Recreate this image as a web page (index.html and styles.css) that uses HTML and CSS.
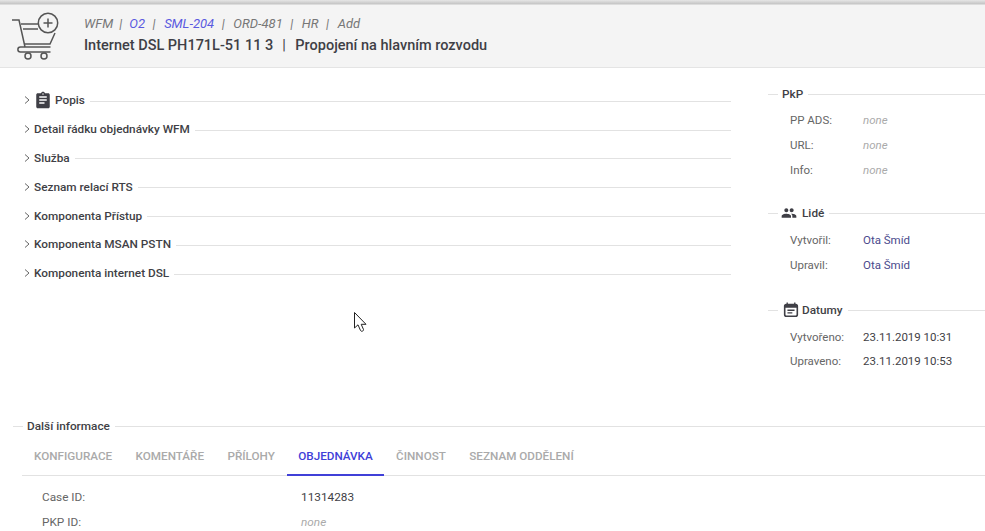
FILE: index.html
```html
<!DOCTYPE html>
<html lang="cs">
<head>
<meta charset="utf-8">
<title>Propojení na hlavním rozvodu</title>
<link rel="stylesheet" href="styles.css">
</head>
<body>
<header class="header">
  <svg class="cart" width="60" height="50" viewBox="0 0 60 50" fill="none" stroke="#555" stroke-width="1.500">
    <path d="M0 9H7L13 36"/>
    <path d="M9 13H26M11 18H26"/>
    <path d="M43 22L38 33H12"/>
    <path d="M38.500 36H8.500C5 36 5 41 8.500 41H38.500"/>
    <circle cx="36" cy="12" r="9.700"/>
    <path d="M36 7.500V16.500M31.500 12H40.500"/>
    <circle cx="16" cy="45" r="3"/>
    <circle cx="32" cy="45" r="3"/>
  </svg>
  <div class="head-text">
    <div class="crumbs">
      <span>WFM</span><i class="first">|</i><a>O2</a><i>|</i><a>SML-204</a><i>|</i><span>ORD-481</span><i>|</i><span>HR</span><i>|</i><span>Add</span>
    </div>
    <h1 class="title"><span>Internet DSL PH171L-51 11 3</span><i>|</i><span>Propojení na hlavním rozvodu</span></h1>
  </div>
</header>

<main class="main">
  <section class="accordion">
    <div class="acc-row"><svg class="chev" width="6" height="8" viewBox="0 0 6 8"><path d="M1 0.500L5 4L1 7.500" fill="none" stroke="#666" stroke-width="1"/></svg>
      <svg class="ico" width="18" height="18" viewBox="0 0 24 24"><path fill="#3f3f46" d="M19 3h-4.200C14.400 1.800 13.300 1 12 1s-2.400.8-2.800 2H5c-1.100 0-2 .9-2 2v16c0 1.100.9 2 2 2h14c1.100 0 2-.9 2-2V5c0-1.100-.9-2-2-2zm-7 0c.6 0 1 .4 1 1s-.4 1-1 1-1-.4-1-1 .4-1 1-1zm2 14H7v-2h7v2zm3-4H7v-2h10v2zm0-4H7V7h10v2z"/></svg>
      <span class="acc-label">Popis</span><span class="rule"></span></div>
    <div class="acc-row"><svg class="chev" width="6" height="8" viewBox="0 0 6 8"><path d="M1 0.500L5 4L1 7.500" fill="none" stroke="#666" stroke-width="1"/></svg><span class="acc-label">Detail řádku objednávky WFM</span><span class="rule"></span></div>
    <div class="acc-row"><svg class="chev" width="6" height="8" viewBox="0 0 6 8"><path d="M1 0.500L5 4L1 7.500" fill="none" stroke="#666" stroke-width="1"/></svg><span class="acc-label">Služba</span><span class="rule"></span></div>
    <div class="acc-row"><svg class="chev" width="6" height="8" viewBox="0 0 6 8"><path d="M1 0.500L5 4L1 7.500" fill="none" stroke="#666" stroke-width="1"/></svg><span class="acc-label">Seznam relací RTS</span><span class="rule"></span></div>
    <div class="acc-row"><svg class="chev" width="6" height="8" viewBox="0 0 6 8"><path d="M1 0.500L5 4L1 7.500" fill="none" stroke="#666" stroke-width="1"/></svg><span class="acc-label">Komponenta Přístup</span><span class="rule"></span></div>
    <div class="acc-row"><svg class="chev" width="6" height="8" viewBox="0 0 6 8"><path d="M1 0.500L5 4L1 7.500" fill="none" stroke="#666" stroke-width="1"/></svg><span class="acc-label">Komponenta MSAN PSTN</span><span class="rule"></span></div>
    <div class="acc-row"><svg class="chev" width="6" height="8" viewBox="0 0 6 8"><path d="M1 0.500L5 4L1 7.500" fill="none" stroke="#666" stroke-width="1"/></svg><span class="acc-label">Komponenta internet DSL</span><span class="rule"></span></div>
    <svg class="pointer" width="13" height="21" viewBox="0 0 13 21"><path d="M0.500 0.500V16L4 12.800L6.500 18.500C7 20 10 19 9.500 17.500L7.200 12.300H12L0.500 0.500Z" fill="#fff" stroke="#222" stroke-width="1"/></svg>
  </section>

  <aside class="side">
    <section class="panel">
      <div class="legend"><span class="dash"></span><span class="legend-label">PkP</span><span class="rule"></span></div>
      <dl class="fields">
        <div class="field"><dt>PP ADS:</dt><dd class="none">none</dd></div>
        <div class="field"><dt>URL:</dt><dd class="none">none</dd></div>
        <div class="field"><dt>Info:</dt><dd class="none">none</dd></div>
      </dl>
    </section>
    <section class="panel panel-people">
      <div class="legend"><span class="dash"></span>
        <svg class="ico-side" width="16" height="16" viewBox="0 0 24 24"><path fill="#3f3f46" d="M16 11c1.660 0 2.990-1.340 2.990-3S17.660 5 16 5s-3 1.340-3 3 1.340 3 3 3zm-8 0c1.660 0 2.990-1.340 2.990-3S9.660 5 8 5 5 6.340 5 8s1.340 3 3 3zm0 2c-2.330 0-7 1.170-7 3.500V19h14v-2.500C15 14.170 10.330 13 8 13zm8 0c-.29 0-.62.020-.97.050 1.160.84 1.970 1.970 1.970 3.450V19h6v-2.500c0-2.330-4.670-3.500-7-3.500z"/></svg>
        <span class="legend-label">Lidé</span><span class="rule"></span></div>
      <dl class="fields fields-people">
        <div class="field"><dt>Vytvořil:</dt><dd class="person">Ota Šmíd</dd></div>
        <div class="field"><dt>Upravil:</dt><dd class="person">Ota Šmíd</dd></div>
      </dl>
    </section>
    <section class="panel panel-dates">
      <div class="legend"><span class="dash"></span>
        <svg class="ico-side cal" width="16" height="16" viewBox="0 0 18 18"><path fill="#3f3f46" d="M4 0.500h1.500V2h7V0.500H14V2h.5C15.900 2 17 3.100 17 4.500v10c0 1.400-1.100 2.500-2.500 2.500h-11C2.100 17 1 15.900 1 14.500v-10C1 3.100 2.100 2 3.500 2H4zM2.800 6.500v7.700c0 .6.400 1 1 1h10.400c.6 0 1-.4 1-1V6.500zM5 8.500h8V10H5zM5 11.500h5.500V13H5z" fill-rule="evenodd"/></svg>
        <span class="legend-label">Datumy</span><span class="rule"></span></div>
      <dl class="fields fields-dates">
        <div class="field"><dt>Vytvořeno:</dt><dd>23.11.2019 10:31</dd></div>
        <div class="field"><dt>Upraveno:</dt><dd>23.11.2019 10:53</dd></div>
      </dl>
    </section>
  </aside>
</main>

<section class="more">
  <div class="legend more-legend"><span class="dash"></span><span class="legend-label">Další informace</span><span class="rule"></span></div>
  <nav class="tabs">
    <a class="tab">Konfigurace</a>
    <a class="tab">Komentáře</a>
    <a class="tab">Přílohy</a>
    <a class="tab active">Objednávka</a>
    <a class="tab">Činnost</a>
    <a class="tab">Seznam oddělení</a>
  </nav>
  <dl class="order">
    <div class="order-row"><dt>Case ID:</dt><dd>11314283</dd></div>
    <div class="order-row"><dt>PKP ID:</dt><dd class="none">none</dd></div>
  </dl>
</section>
</body>
</html>
```
FILE: styles.css
```css
* { box-sizing: border-box; }
html, body { height: 531px; overflow: hidden; }
body {
  margin: 0;
  background: #fff;
  font-family: Roboto, "Liberation Sans", sans-serif;
  font-size: 11.800px;
  color: #3f3f46;
}
dl, dd, dt, h1 { margin: 0; font-weight: 400; }

.header {
  height: 68px;
  display: flex;
  align-items: flex-start;
  padding: 7px 0 0 12px;
  background: linear-gradient(#e6e6e6, #c4c4c4 4px, #f4f4f4 5px);
  border-bottom: 1px solid #e4e4e4;
}
.cart { margin-top: 4px; flex: none; }
.head-text { margin-left: 12px; }
.crumbs {
  margin-top: 8px;
  height: 18px;
  line-height: 18px;
  font-size: 13px;
  font-style: italic;
  color: #777;
  white-space: nowrap;
}
.crumbs i { margin: 0 8.500px 0 7.500px; }
.crumbs i.first { margin: 0 7px 0 6px; }
.crumbs a { color: #5a5ae0; }
.title {
  margin-top: 4px;
  font-size: 14.500px;
  line-height: 18px;
  font-weight: 500;
  color: #3f3f46;
  white-space: nowrap;
}
.title i { font-style: normal; font-weight: 400; margin: 0 9.500px 0 9px; }

.main {
  position: relative;
  display: flex;
  height: 326px;
}
.accordion {
  width: 707px;
  margin-left: 24px;
  padding-top: 18px;
  flex: none;
}
.acc-row {
  height: 28.800px;
  display: flex;
  align-items: center;
  white-space: nowrap;
}
.acc-row .rule { position: relative; top: 1px; }
.chev { margin-right: 4px; flex: none; }
.ico { margin-right: 3px; flex: none; }
.acc-label { font-weight: 500; color: #3f3f46; }
.rule { flex: 1; height: 1px; background: #e2e2e2; margin-left: 5px; }
.pointer { position: absolute; left: 354px; top: 244px; }

.side { margin-left: 37px; flex: 1; padding-top: 16px; min-width: 0; }
.legend {
  display: flex;
  align-items: center;
  height: 20px;
  white-space: nowrap;
}
.dash { width: 10px; height: 1px; background: #e2e2e2; margin-right: 4px; }
.legend-label { font-weight: 500; color: #3f3f46; }
.ico-side { margin: 0 5px 0 -1px; flex: none; }
.ico-side.cal { margin: 0 3px 0 1px; }
.fields { padding: 4px 0 0 22px; font-size: 11.500px; }
.fields-people { padding-top: 5px; }
.fields-dates { padding-top: 4px; }
.field { display: flex; height: 24.700px; align-items: center; }
.field dt { width: 73px; color: #666; flex: none; }
.field dd { color: #3f3f46; }
.panel-people { margin-top: 21px; }
.panel-dates { margin-top: 23px; }
.person { color: #4a4a8c !important; }
.none { color: #aaa !important; font-style: italic; }

.more { padding-left: 13px; }
.more-legend { margin-top: 22px; }
.more-legend .rule { margin-left: 5px; }
.tabs {
  display: flex;
  height: 40px;
  margin-left: 9px;
  border-bottom: 1px solid #e2e2e2;
}
.tab {
  padding: 0 11.700px;
  line-height: 40px;
  text-transform: uppercase;
  font-weight: 500;
  font-size: 11.700px;
  color: #aaa;
  white-space: nowrap;
}
.tab:first-child { padding-left: 12px; }
.tab.active { color: #4040d8; border-bottom: 2px solid #4040d8; height: 40px; }
.order { padding: 8px 0 0 29px; }
.order-row { display: flex; height: 25px; align-items: center; }
.order-row dt { width: 259px; color: #666; flex: none; }
.order-row dd { color: #3f3f46; }
```
